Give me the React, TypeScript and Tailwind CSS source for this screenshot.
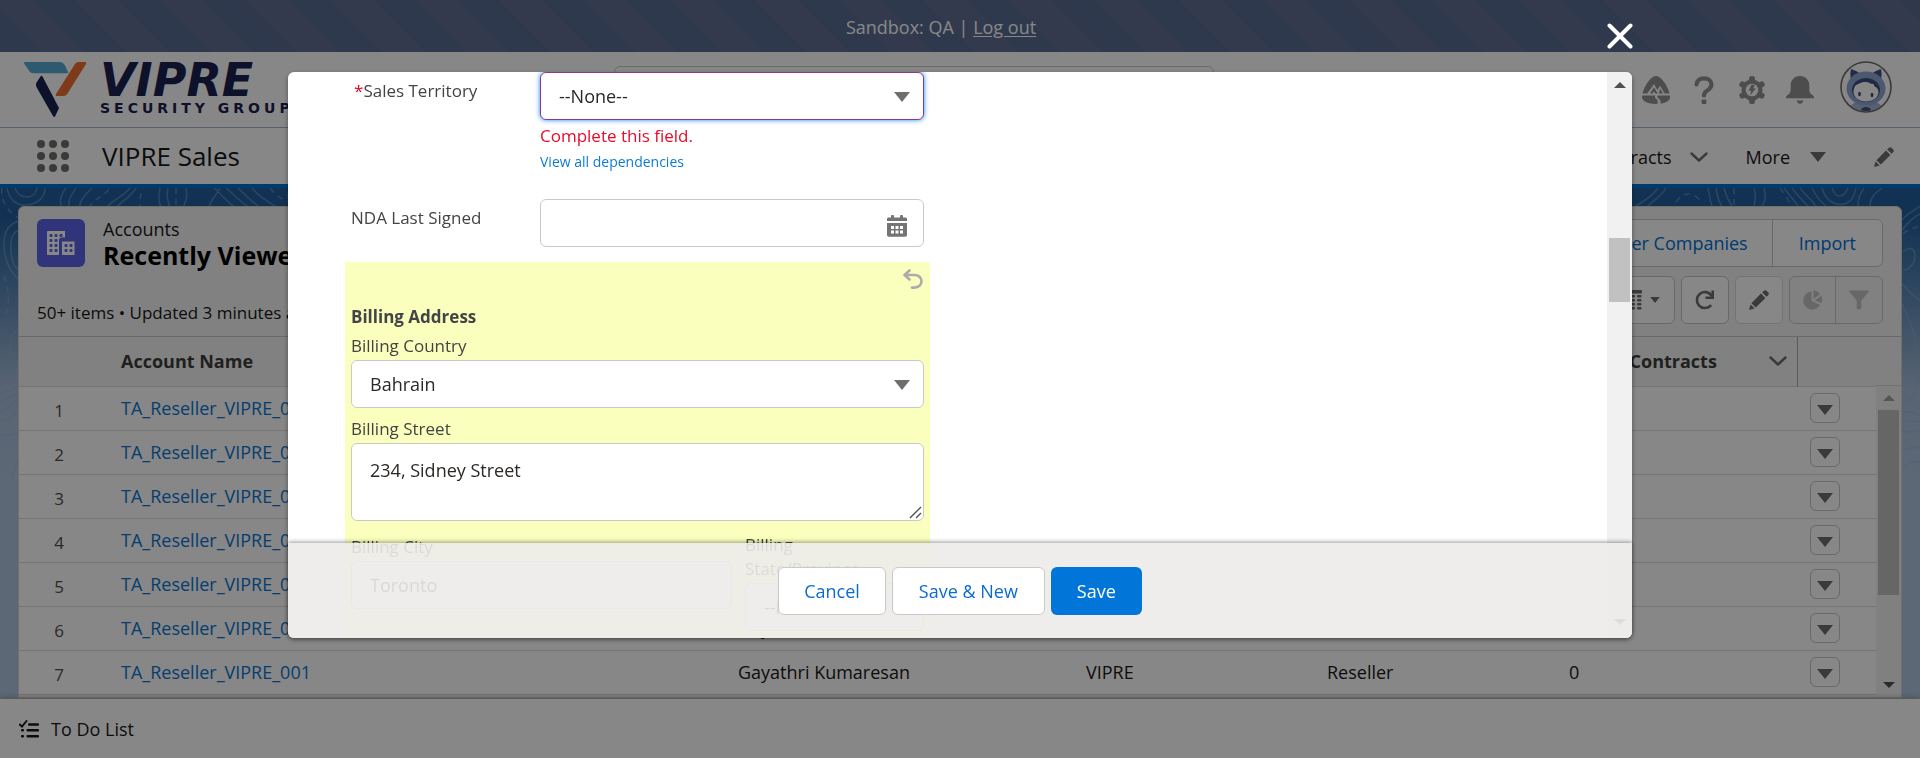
import React from "react";

type IconProps = { className?: string };

const Triangle = ({ className }: IconProps) => (
  <svg viewBox="0 0 16 10" className={className} fill="currentColor" aria-hidden="true">
    <path d="M0 0h16L8 10z" />
  </svg>
);

const ScrollUp = ({ className }: IconProps) => (
  <svg viewBox="0 0 12 6" className={className} fill="currentColor" aria-hidden="true">
    <path d="M0 6h12L6 0z" />
  </svg>
);

const ScrollDown = ({ className }: IconProps) => (
  <svg viewBox="0 0 12 6" className={className} fill="currentColor" aria-hidden="true">
    <path d="M0 0h12L6 6z" />
  </svg>
);

const Chevron = ({ className }: IconProps) => (
  <svg viewBox="0 0 18 10" className={className} fill="none" stroke="currentColor" strokeWidth="2.4" strokeLinecap="round" strokeLinejoin="round" aria-hidden="true">
    <path d="M1.5 1.5L9 8.5l7.500-7" />
  </svg>
);

const Pencil = ({ className }: IconProps) => (
  <svg viewBox="0 0 20 20" className={className} fill="currentColor" aria-hidden="true">
    <path d="M12 3.600l4.400 4.400L6.800 17.600 2.400 13.200z" />
    <path d="M13.200 2.400L15 .7c.7-.7 1.700-.7 2.400 0l1.900 1.900c.7.7.7 1.700 0 2.400l-1.700 1.800z" />
    <path d="M1.600 14.400l4 4-4.600 1.400c-.5.100-.9-.3-.8-.8z" />
  </svg>
);

const Undo = ({ className }: IconProps) => (
  <svg viewBox="0 0 20 20" className={className} fill="none" stroke="currentColor" strokeWidth="2.600" strokeLinecap="round" strokeLinejoin="round" aria-hidden="true">
    <path d="M6.500 1.500L1.500 6l5 4.500M2 6h9.500c4 0 7 2.700 7 6.300s-3 6.300-7 6.300H9" />
  </svg>
);

const Calendar = ({ className }: IconProps) => (
  <svg viewBox="0 0 20 22" className={className} aria-hidden="true">
    <g fill="currentColor">
      <path d="M1.500 2.500h17c.8 0 1.500.7 1.500 1.500v2H0V4c0-.8.700-1.500 1.500-1.500z" />
      <rect x="4" y="0" width="3" height="4" rx="1" />
      <rect x="13" y="0" width="3" height="4" rx="1" />
      <path d="M0 8h20v12c0 1-.8 1.700-1.700 1.700H1.700C.8 21.700 0 21 0 20z" />
    </g>
    <g fill="#fff">
      <rect x="4" y="11" width="3" height="3" />
      <rect x="8.500" y="11" width="3" height="3" />
      <rect x="13" y="11" width="3" height="3" />
      <rect x="4" y="15.500" width="3" height="3" />
      <rect x="8.500" y="15.500" width="3" height="3" />
      <rect x="13" y="15.500" width="3" height="3" />
    </g>
  </svg>
);

const LogoMark = () => (
  <svg viewBox="0 0 62 55" className="h-[55px] w-[62px] shrink-0" aria-hidden="true">
    <path d="M1 0h34c3 0 5 1.500 6.300 4L44 10c.4 1-.2 1.300-1 1.300H10C6.500 11.300 5 9 4 7L.4 2C-.2 1 .2 0 1 0z" fill="#55abd6" />
    <path d="M51 2c.8-1.300 2-2 4-2h6c1.200 0 1.500.8 1 2L43.500 31.500c-.9 1.500-2 2.500-4 2.500H33c-1.300 0-1.700-.8-1-2z" fill="#f07030" />
    <path d="M16.500 14.500c.6-1 1.500-1 2 0L35 46l-3.700 8c-.6 1.200-1.600 1.200-2.300 0L13 26c-1.300-2.300-1.300-3.600-.5-5.500z" fill="#1b2150" />
  </svg>
);

const Trailhead = () => (
  <svg viewBox="0 0 28 28" className="h-7 w-7" fill="currentColor" aria-hidden="true">
    <path d="M14 0c3.500 0 7.500 4.500 10 9 1.500 2.600 3 6 3.400 8.500h-4.700L18 9.800l-2.600 4.200L12 8 5.300 17.500H.6C1 15 2.500 11.600 4 9 6.500 4.500 10.500 0 14 0z" />
    <path d="M8 17.500l4-6.200 3 5 .9 1.200h-2.500L12 15.500l-1.600 2zM17 17.500l1-5 3 5z" />
    <path d="M0 19.600h13.500c-1.600 1.800.5 3 1.700 4.200.7.800.6 2.200.1 4.100C8 28.200 0 25.800 0 21zM16 19.600h12V21c0 4-4.600 6-9.500 6.700.5-2.800-.5-4.300-2-5.200-1.300-.8-1.600-1.900-.5-2.900z" />
  </svg>
);

const Help = () => (
  <svg viewBox="0 0 20 28" className="h-7 w-5" fill="none" aria-hidden="true">
    <path d="M2.500 8.500C2.500 5 5.600 2.300 10 2.300s7.500 2.700 7.500 6.300c0 3.200-2 4.500-4.200 5.900-2 1.200-3.300 2.300-3.300 5" stroke="currentColor" strokeWidth="4.200" strokeLinecap="round" />
    <rect x="7.600" y="23.500" width="4.800" height="4.500" rx="1" fill="currentColor" />
  </svg>
);

const Gear = () => (
  <svg viewBox="0 0 28 28" className="h-7 w-7" aria-hidden="true">
    <g fill="currentColor">
      <circle cx="14" cy="14" r="10.500" />
      <rect x="11" y="0" width="6" height="28" rx="2.500" />
      <rect x="11" y="0" width="6" height="28" rx="2.500" transform="rotate(60 14 14)" />
      <rect x="11" y="0" width="6" height="28" rx="2.500" transform="rotate(120 14 14)" />
    </g>
    <circle cx="14" cy="14" r="6.300" fill="#fff" />
    <path d="M13.500 8.800h3.200l-1.500 3.700h2.600L12 19.500l1.300-4.700h-2.600z" fill="currentColor" />
  </svg>
);

const Bell = () => (
  <svg viewBox="0 0 28 28" className="h-7 w-7" fill="currentColor" aria-hidden="true">
    <path d="M14 0c5.500 0 9.300 4 9.300 9v4c0 3 1 4.700 2.500 5.800 1.300.8 2.200 1.600 2.200 2.600v.8H0v-.8c0-1 .9-1.800 2.200-2.600C3.700 17.700 4.700 16 4.700 13V9c0-5 3.800-9 9.300-9z" />
    <path d="M10.800 24.600h6.400c0 1.800-1.400 3.200-3.200 3.200s-3.200-1.400-3.200-3.200z" />
  </svg>
);

const Avatar = () => (
  <svg viewBox="0 0 52 52" className="h-[52px] w-[52px]" aria-hidden="true">
    <circle cx="26" cy="26" r="25" fill="#fff" stroke="#6f6d6a" strokeWidth="1.600" />
    <clipPath id="face">
      <circle cx="26" cy="26" r="24" />
    </clipPath>
    <g clipPath="url(#face)">
      <path d="M12 9c3 0 6.500 1.700 8 4l-8 5zM40 9c-3 0-6.500 1.700-8 4l8 5z" fill="#3f5587" />
      <path d="M11 8.500c.8-.5 2 0 2.500 1L15 17l-4 2c-.8-4-.8-8.500 0-10.500zM41 8.500c-.8-.5-2 0-2.500 1L37 17l4 2c.8-4 .8-8.500 0-10.500z" fill="#3f5587" />
      <path d="M8 54c0-7 3-11 8-13h20c5 2 8 6 8 13z" fill="#a3b5d8" />
      <ellipse cx="26" cy="27.500" rx="19.500" ry="17" fill="#8fa6d2" />
      <ellipse cx="26" cy="29" rx="14" ry="12" fill="#3c5080" />
      <path d="M13.500 31c0-3 .8-5 2.500-7 2-.5 3.500-2 6-2.500 3-1 7-.5 9 1.500 2.500-.5 3.500.5 3 2 2.500 1 4.500 3 4.500 6 0 5-5 9.500-12.500 9.500S13.500 36 13.500 31z" fill="#fff" />
      <ellipse cx="19.500" cy="33" rx="1.400" ry="2.200" fill="#3c5080" />
      <ellipse cx="32" cy="34" rx="1.400" ry="2.200" fill="#3c5080" />
      <path d="M20.500 51c0-3 2.500-5 5.500-5s5.500 2 5.500 5z" fill="#3c5080" />
    </g>
  </svg>
);

const Buildings = () => (
  <svg viewBox="0 0 28 24" className="h-6 w-7" aria-hidden="true">
    <path d="M1 0h17v6.500h-3.500c-1.500 0-2.500 1-2.500 2.500V24H0V1c0-.6.400-1 1-1z" fill="#fff" />
    <path d="M15 10.500h12.500V24H15z" fill="#fff" />
    <g fill="#5c64e8">
      {[3, 8, 13, 18].map((y) => (
        <React.Fragment key={y}>
          <rect x="2.500" y={y} width="3" height="3" rx="1" />
          <rect x="7.500" y={y} width="3" height="3" rx="1" />
        </React.Fragment>
      ))}
      <rect x="12.500" y="3" width="3" height="3" rx="1" />
      <rect x="17.500" y="13" width="3" height="3" rx="1" />
      <rect x="22.500" y="13" width="3" height="3" rx="1" />
      <rect x="17.500" y="18" width="3" height="3" rx="1" />
      <rect x="22.500" y="18" width="3" height="3" rx="1" />
    </g>
  </svg>
);

const TableIcon = () => (
  <svg viewBox="0 0 24 20" className="h-5 w-6" fill="currentColor" aria-hidden="true">
    <rect width="24" height="3.500" rx="1" />
    {[5, 9, 13, 17].map((y) => (
      <React.Fragment key={y}>
        <rect x="0" y={y} width="4.500" height="2.400" rx="1" />
        <rect x="6" y={y} width="4.500" height="2.400" rx="1" />
        <rect x="12.500" y={y} width="4.500" height="2.400" rx="1" />
        <rect x="19" y={y} width="4.500" height="2.400" rx="1" />
      </React.Fragment>
    ))}
  </svg>
);

const Refresh = () => (
  <svg viewBox="0 0 20 20" className="h-5 w-5" fill="none" stroke="currentColor" strokeWidth="2.600" aria-hidden="true">
    <path d="M15.500 15.800a8 8 0 1 1 1-10.300" strokeLinecap="round" />
    <path d="M17.700.5v7.200h-7.200" />
  </svg>
);

const Pie = () => (
  <svg viewBox="0 0 20 20" className="h-5 w-5" fill="currentColor" aria-hidden="true">
    <path d="M8.500 1.500v9.600l8.600 3.800A9 9 0 1 1 8.500 1.500z" />
    <path d="M10.500.5A8.500 8.500 0 0 1 17 4l-6.500 5zM18.300 5.700a9 9 0 0 1 .2 7.300l-6.700-2.500z" />
  </svg>
);

const Funnel = () => (
  <svg viewBox="0 0 20 20" className="h-5 w-5" fill="currentColor" aria-hidden="true">
    <path d="M.8.500h18.400c.6 0 1 .7.500 1.200l-7.400 8.800v7.500c0 .8-.5 1.300-1.200 1.300H9c-.8 0-1.300-.5-1.300-1.300v-7.500L.3 1.700C-.2 1.200.2.500.8.500z" />
  </svg>
);

const TodoIcon = () => (
  <svg viewBox="0 0 20 18" className="h-[18px] w-5" aria-hidden="true">
    <path d="M.8 4.500L3 6.500 7.500 1" fill="none" stroke="currentColor" strokeWidth="1.900" strokeLinecap="round" />
    <g fill="currentColor">
      <rect x="9" y="3.200" width="11" height="2.600" rx="1" />
      <rect x="7.500" y="9" width="12.500" height="2.600" rx="1" />
      <rect x="7.500" y="15" width="12.500" height="2.600" rx="1" />
      <rect x="2" y="9" width="3" height="2.600" rx="1" />
      <rect x="2" y="15" width="3" height="2.600" rx="1" />
    </g>
  </svg>
);

const Waffle = () => (
  <svg viewBox="0 0 32 32" className="h-8 w-8" fill="currentColor" aria-hidden="true">
    {[4, 16, 28].map((y) => [4, 16, 28].map((x) => <circle key={x + "-" + y} cx={x} cy={y} r="4" />))}
  </svg>
);

const Contours = ({ className }: IconProps) => (
  <svg viewBox="0 0 320 320" className={className} fill="none" stroke="#8fb4dc" strokeOpacity="0.45" strokeWidth="1.500" aria-hidden="true">
    <path d="M7 0c2 12 10 18 20 17s18-7 18-17M15 0c2 6 6 9 12 9s9-3 10-9M66 0c-8 10-6 18-2 22M76 0c-4 6-10 14-6 22M92 0c-8 8-14 14-12 22" />
    <path d="M104 22C112 12 124 8 130 0M114 22c6-8 16-12 22-22M160 0c-2 8-2 14 2 22M168 0c-2 8 0 14 3 22M186 0c2 8 0 14-4 22M208 22c2-10 8-14 12-22M214 0c8 6 12 14 22 20M226 0c8 6 14 14 24 20M238 0c6 6 12 12 20 18M252 0c6 8 16 14 26 20M290 0c-4 8-2 14 4 22" />
    <path d="M88 20c8-10 16-12 22-20M142 22c-4-8-2-16 2-22M176 0v22M270 0c4 6 12 12 24 16" strokeDasharray="6 5" />
    <path d="M19 33C8 36 3 46 4 60s6 24 15 32M19 42c-8 3-9 12-8 22s4 16 8 18M19 140c-8 6-10 16-8 24s4 10 8 12M2 178c4-6 14-4 14 0s-6 10-12 8-4-6-2-8zM0 162c8 2 12 4 19 4" />
    <path d="M2 0c-2 14 8 26 17 30M4 88c6 18 6 30 0 42" strokeDasharray="6 5" />
    <path d="M1 206c8-4 12-6 18-7M1 214c8-3 10-8 18-9M1 224c8-4 10-9 18-12M1 234c8-2 12-6 18-10M1 248c6-1 12-1 18-4M12 290c2-10 4-14 7-18" />
  </svg>
);

const ContoursRight = ({ className }: IconProps) => (
  <svg viewBox="0 0 300 320" className={className} fill="none" stroke="#8fb4dc" strokeOpacity="0.45" strokeWidth="1.500" aria-hidden="true">
    <path d="M16 18C26 12 34 6 38 0M28 18c6-6 14-10 18-18M88 0c2 8 2 14 4 18M96 0c2 8 2 14 6 18M104 0c2 8 4 12 8 18M134 18c2-8 2-12 0-18M142 18c4-6 4-12 2-18M164 0c6 8 10 12 14 18M172 0c6 8 10 12 16 18M180 0c6 8 12 12 16 18M202 0c4 14 14 18 22 16s10-8 12-16M192 0c4 8 8 14 14 18M212 0c2 6 4 8 8 8s6-4 8-8M244 0c-4 6-6 10-6 18M262 0c-8 6-12 10-12 18" />
    <path d="M56 14c8-12 20-10 26 2M114 0v18M160 0c6 8 8 12 12 18" strokeDasharray="6 5" />
    <path d="M300 18c-8 6-14 8-18 14M300 26c-8 4-12 8-18 16M283 64c6-6 12-4 12 4s-6 14-12 14M282 96c8 8 12 14 18 16M282 116c10 20 14 32 14 44s-6 14-14 18M300 170c-8 4-14 2-18 12M283 186c8-8 17 0 15 10s-9 20-15 16" />
    <path d="M282 224c8 0 14 0 18 3M282 232c8 0 14 2 18 2M282 242c8 4 14 2 18 0M282 262c8-2 14-4 18-1M282 280c8-6 14-8 18-6" />
    <path d="M283 46c6-6 12-4 17-10M300 174c-6 4-12 4-18 8" strokeDasharray="6 5" />
  </svg>
);

const rows = [1, 2, 3, 4, 5, 6, 7];

const iconButton = "flex h-12 w-12 items-center justify-center rounded-md border bg-white";

export default function App() {
  return (
    <div className="relative flex h-screen flex-col overflow-hidden bg-white font-['Open_Sans',sans-serif] text-[18px] leading-7 text-[#181818]">
      <div className="flex h-[52px] shrink-0 items-center justify-center bg-[repeating-linear-gradient(45deg,#596d92_0_30px,#606f94_30px_60px)] pr-[38px] pt-[2px] text-[18px] text-white">
        <span>Sandbox: QA |&nbsp;</span>
        <a href="#logout" className="underline underline-offset-2">Log out</a>
      </div>

      <header className="flex h-[76px] shrink-0 items-center border-b border-[#a3b5cc] pr-7 pl-6">
        <div className="flex w-[590px] shrink-0 items-center gap-[14px]">
          <LogoMark />
          <div className="flex flex-col">
            <span className="font-['DejaVu_Sans',sans-serif] text-[46px] leading-9 font-bold text-[#1b2150] italic">VIPRE</span>
            <span className="font-['DejaVu_Sans',sans-serif] text-[14px] leading-5 font-bold tracking-[4px] text-[#1b2150]">SECURITY GROUP</span>
          </div>
        </div>
        <input aria-label="Search" type="search" className="h-12 w-[600px] rounded-md border border-[#c9c7c5]" />
        <div className="flex flex-1 items-center justify-end gap-6 text-[#919191]">
          <a href="#trailhead" aria-label="Guidance"><Trailhead /></a>
          <button aria-label="Help"><Help /></button>
          <button aria-label="Setup"><Gear /></button>
          <button aria-label="Notifications" className="-ml-1"><Bell /></button>
          <button aria-label="View profile" className="mb-[6px] ml-[2px]"><Avatar /></button>
        </div>
      </header>

      <nav className="flex h-14 shrink-0 items-center justify-between pr-[26px] pl-[37px]">
        <div className="flex items-center gap-[33px]">
          <button aria-label="App Launcher" className="text-[#706e6b]"><Waffle /></button>
          <span className="text-[26px] leading-8">VIPRE Sales</span>
        </div>
        <div className="flex items-center pt-px">
          <a href="#contracts">Contracts</a>
          <button aria-label="Contracts list" className="ml-[18px] text-[#706e6b]"><Chevron className="h-[10px] w-[18px]" /></button>
          <button className="ml-[38px] flex items-center gap-5">More <Triangle className="h-[10px] w-4 text-[#706e6b]" /></button>
          <button aria-label="Edit navigation" className="ml-[48px] text-[#706e6b]"><Pencil className="h-5 w-5" /></button>
        </div>
      </nav>
      <div className="h-1 shrink-0 bg-[#0070d2]" />

      <main className="relative flex min-h-0 flex-1 bg-[linear-gradient(#225f9d_0,#225f9d_30px,#a8bdd8_200px,#b0c4df_290px)] px-[18px] pt-[18px]">
        <Contours className="absolute top-0 left-0 h-80 w-80" />
        <ContoursRight className="absolute top-0 right-0 h-80 w-[300px]" />
        <section className="relative flex flex-1 flex-col overflow-hidden rounded-t-md border border-[#d4d4d4] bg-[#f3f3f3]">
          <div className="flex justify-between px-[18px] pt-3">
            <div>
              <div className="flex gap-[18px]">
                <span className="flex h-12 w-12 items-center justify-center rounded-md bg-[#5c64e8]"><Buildings /></span>
                <h1 className="-mt-[3px]">
                  <span className="block text-[18px] leading-[26px]">Accounts</span>
                  <span className="block text-[25px] leading-[26px] font-bold text-black">Recently Viewed</span>
                </h1>
              </div>
              <p className="mt-[31px] text-[17px] leading-7">50+ items • Updated 3 minutes ago</p>
            </div>
            <div className="flex flex-col items-end gap-[9px]">
              <div className="flex h-12 divide-x divide-[#c9c7c5] rounded-md border border-[#c9c7c5] bg-white text-[#0070d2]">
                <button className="px-6">New</button>
                <button className="px-6">Discover Companies</button>
                <button className="px-[26px]">Import</button>
              </div>
              <div className="flex gap-[6px] text-[#706e6b]">
                <button aria-label="Display as table" className="flex h-12 items-center gap-2 rounded-md border border-[#c9c7c5] bg-white px-[14px]">
                  <TableIcon /><Triangle className="h-[6px] w-[10px]" />
                </button>
                <button aria-label="Refresh" className={iconButton + " border-[#c9c7c5]"}><Refresh /></button>
                <button aria-label="Edit list" className={iconButton + " border-[#dddbda]"}><Pencil className="h-5 w-5" /></button>
                <div className="flex divide-x divide-[#c9c7c5] rounded-md border border-[#c9c7c5] text-[#c4c2c0]">
                  <button aria-label="Show charts" className="flex w-[46px] items-center justify-center"><Pie /></button>
                  <button aria-label="Show filters" className="flex w-[46px] items-center justify-center"><Funnel /></button>
                </div>
              </div>
            </div>
          </div>

          <div className="mt-[9px] flex min-h-0 flex-1 border-t border-[#c9c7c5]">
            <div className="min-w-0 flex-1 overflow-hidden">
              <table className="w-full table-fixed border-collapse bg-white text-left">
                <colgroup>
                  <col className="w-20" />
                  <col />
                  <col className="w-[348px]" />
                  <col className="w-[241px]" />
                  <col className="w-[242px]" />
                  <col className="w-[250px]" />
                  <col className="w-[79px]" />
                </colgroup>
                <thead>
                  <tr className="h-[49px] border-b border-[#dddbda] bg-[#f3f3f3] text-[#3e3e3c]">
                    <th aria-label="Row number" />
                    <th className="pl-[22px]">Account Name</th>
                    <th className="pl-[22px]">Owner</th>
                    <th className="pl-[22px]">Company</th>
                    <th className="pl-[22px]">Type</th>
                    <th className="border-r border-[#b0adab] pl-[22px]">
                      <span className="flex items-center justify-between pr-[10px]">
                        Active Contracts <Chevron className="h-[10px] w-[18px] text-[#706e6b]" />
                      </span>
                    </th>
                    <th aria-label="Actions" />
                  </tr>
                </thead>
                <tbody>
                  {rows.map((n) => (
                    <tr key={n} className="h-11 border-b border-[#dddbda]">
                      <td className="pt-[6px] text-center text-[17px] text-[#514f4d]">{n}</td>
                      <td className="pl-[22px]"><a href="#account" className="text-[#0b76d0]">TA_Reseller_VIPRE_001</a></td>
                      <td className="pl-[22px]">Gayathri Kumaresan</td>
                      <td className="pl-[22px]">VIPRE</td>
                      <td className="pl-[22px]">Reseller</td>
                      <td className="pl-[22px]">0</td>
                      <td className="pl-[13px]">
                        <button aria-label={"Actions for row " + n} className="flex h-[30px] w-[30px] items-center justify-center rounded-md border border-[#c9c7c5] pt-1 text-[#706e6b]">
                          <Triangle className="h-[10px] w-4" />
                        </button>
                      </td>
                    </tr>
                  ))}
                </tbody>
              </table>
            </div>
            <div className="flex w-[25px] flex-col items-center bg-[#f1f1f1] pb-[9px]">
              <div className="h-[49px] w-full border-b border-[#dddbda] bg-[#f3f3f3]" />
              <ScrollUp className="my-[9px] h-[6px] w-3 text-[#a3a3a3]" />
              <div className="h-[185px] w-[21px] bg-[#c1c1c1]" />
              <ScrollDown className="mt-auto h-[6px] w-3 text-[#505050]" />
            </div>
          </div>
        </section>
      </main>

      <footer className="z-10 flex h-[60px] shrink-0 items-center border-t border-[#b0adab] bg-white pl-[19px] shadow-[0_-2px_4px_rgba(0,0,0,0.15)]">
        <button className="flex items-center gap-3"><TodoIcon /> To Do List</button>
      </footer>

      <div className="fixed inset-0 z-20 flex items-start justify-center bg-black/47 pt-[72px]">
        <div role="dialog" aria-modal="true" aria-label="New Account" className="relative h-[calc(100vh-192px)] w-[70%] rounded-md bg-white shadow-[0_2px_5px_rgba(0,0,0,0.4)]">
          <button aria-label="Close" className="absolute -top-[49px] -right-px text-white">
            <svg viewBox="0 0 26 26" className="h-[26px] w-[26px]" stroke="currentColor" strokeWidth="4" strokeLinecap="round" aria-hidden="true">
              <path d="M2.500 2.500l21 21M23.500 2.500l-21 21" />
            </svg>
          </button>

          <div className="flex h-full overflow-hidden rounded-md">
            <form className="grid flex-1 grid-cols-2 items-start gap-[35px] px-[57px] text-[17px] text-[#444444]">
              <div>
                <div className="flex px-[6px]">
                  <label htmlFor="territory" className="w-[189px] shrink-0 pt-[5px]">
                    <span className="pl-[3px] text-[#ea001e]">*</span>Sales Territory
                  </label>
                  <div className="flex-1">
                    <div className="relative">
                      <select id="territory" className="block h-12 w-full appearance-none rounded-md border border-[#8a3a8c] bg-white pl-[18px] text-[18px] text-[#2b2826] shadow-[0_0_5px_#1589ee]">
                        <option>--None--</option>
                      </select>
                      <Triangle className="pointer-events-none absolute top-5 right-[14px] h-[10px] w-4 text-[#706e6b]" />
                    </div>
                    <p className="mt-[2px] text-[17px] text-[#ea0a2a]">Complete this field.</p>
                    <a href="#dependencies" className="block text-[14px] leading-6 text-[#0b7bd6]">View all dependencies</a>
                  </div>
                </div>

                <div className="mt-[25px] flex px-[6px]">
                  <label htmlFor="nda" className="w-[189px] shrink-0 pt-[5px]">NDA Last Signed</label>
                  <div className="relative flex-1">
                    <input id="nda" type="text" className="block h-12 w-full rounded-md border border-[#c9c9c9] bg-white px-[18px]" />
                    <Calendar className="pointer-events-none absolute top-4 right-[17px] h-[22px] w-5 text-[#747474]" />
                  </div>
                </div>

                <fieldset className="mt-[15px] h-[400px] bg-[#faffbd] px-[6px] pt-[6px]">
                  <div className="flex h-[35px] justify-end">
                    <button type="button" aria-label="Undo Billing Address" className="flex h-[22px] w-[22px] items-center justify-center text-[#aeaaa8]">
                      <Undo className="h-5 w-5" />
                    </button>
                  </div>
                  <legend className="float-left w-full font-bold">Billing Address</legend>
                  <label htmlFor="country" className="clear-both block pt-px">Billing Country</label>
                  <div className="relative">
                    <select id="country" className="block h-12 w-full appearance-none rounded-md border border-[#c9c9c9] bg-white pl-[18px] text-[18px] text-[#2b2826]">
                      <option>Bahrain</option>
                    </select>
                    <Triangle className="pointer-events-none absolute top-5 right-[14px] h-[10px] w-4 text-[#706e6b]" />
                  </div>
                  <label htmlFor="street" className="mt-[7px] block">Billing Street</label>
                  <div className="relative">
                    <textarea id="street" defaultValue="234, Sidney Street" className="block h-[78px] w-full resize-none rounded-md border border-[#c9c9c9] bg-white px-[18px] py-3 text-[18px] text-[#2b2826]" />
                    <svg viewBox="0 0 13 13" className="pointer-events-none absolute right-[2px] bottom-[2px] h-[13px] w-[13px]" fill="none" stroke="#505050" strokeWidth="1.400" aria-hidden="true">
                      <path d="M1 12L12 1M7 12l5-5" />
                    </svg>
                  </div>
                  <div className="mt-3 flex items-start gap-[13px]">
                    <div className="flex-1">
                      <label htmlFor="city" className="block">Billing City</label>
                      <input id="city" type="text" defaultValue="Toronto" className="block h-12 w-full rounded-md border border-[#c9c9c9] bg-white px-[18px] text-[18px] text-[#2b2826]" />
                    </div>
                    <div className="w-[179px]">
                      <label htmlFor="state" className="block w-[130px] pb-[2px] leading-6">Billing State/Province</label>
                      <select id="state" className="block h-12 w-full appearance-none rounded-md border border-[#c9c9c9] bg-white pl-[18px] text-[18px] text-[#2b2826]">
                        <option>--None--</option>
                      </select>
                    </div>
                  </div>
                </fieldset>
              </div>
              <div />
            </form>
            <div className="flex w-[25px] flex-col items-center bg-[#f1f1f1] pt-[10px] pb-[13px]">
              <ScrollUp className="h-[6px] w-3 text-[#505050]" />
              <div className="mt-[150px] h-16 w-[21px] bg-[#c1c1c1]" />
              <ScrollDown className="mt-auto h-[6px] w-3 text-[#505050]" />
            </div>
          </div>

          <div className="absolute inset-x-0 bottom-0 flex h-[95px] items-start justify-center gap-[6px] rounded-b-md bg-[#ecebea]/90 pt-6 text-[18px] shadow-[0_-1px_4px_rgba(0,0,0,0.4)]">
            <button className="h-12 rounded-md border border-[#c9c9c9] bg-white px-[25px] text-[#0b6bd0]">Cancel</button>
            <button className="h-12 rounded-md border border-[#c9c9c9] bg-white px-[26px] text-[#0b6bd0]">Save &amp; New</button>
            <button className="h-12 rounded-md bg-[#0176d8] px-[26px] text-white">Save</button>
          </div>
        </div>
      </div>
    </div>
  );
}
